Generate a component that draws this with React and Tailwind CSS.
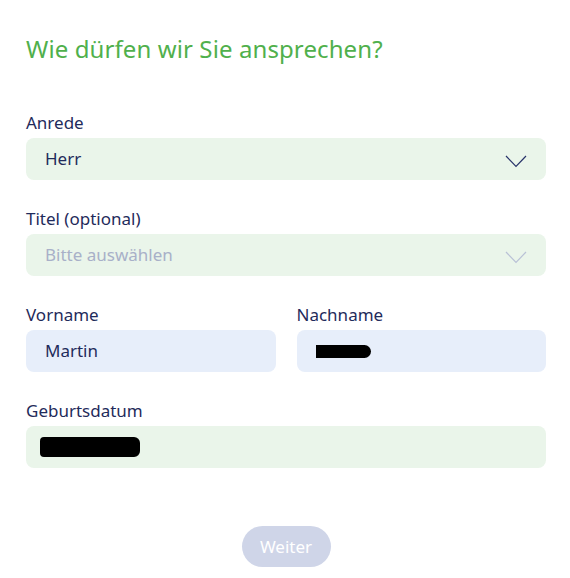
import React from "react";

function Chevron({ light }) {
    return (
        <svg width="22" height="13" viewBox="0 0 22 13" fill="none" className="mt-[4px]">
            <path
                d="M1 1 L11 11.5 L21 1"
                stroke={light ? "#b9c1d6" : "#28336a"}
                strokeWidth="1.2"
            />
        </svg>
    );
}

function Field({ label, children, bg = "bg-[#eaf5ea]", className = "" }) {
    return (
        <div className={"flex flex-col " + className}>
            <label className="text-[17px] leading-6 text-[#1f2b5b] mb-[3px]">{label}</label>
            <div className={"h-[42px] rounded-lg flex items-center pl-[19px] pr-[19px] " + bg}>
                {children}
            </div>
        </div>
    );
}

export default function App() {
    return (
        <div
            className="w-[570px] h-[578px] bg-white px-[26px] pt-[33px]"
            style={{ fontFamily: '"Noto Sans", "Open Sans", sans-serif' }}
        >
            <h1 className="text-[24px] leading-8 text-[#50b04c] tracking-[0.1px]">
                Wie dürfen wir Sie ansprechen?
            </h1>

            <div className="w-[520px] mt-[46px] flex flex-col gap-[27px]">
                <Field label="Anrede">
                    <span className="flex-1 text-[17px] text-[#1f2b5b]">Herr</span>
                    <Chevron />
                </Field>

                <Field label="Titel (optional)">
                    <span className="flex-1 text-[17px] text-[#a8b0c8]">Bitte auswählen</span>
                    <Chevron light />
                </Field>

                <div className="flex gap-[21px]">
                    <Field label="Vorname" bg="bg-[#e7eefa]" className="flex-1">
                        <span className="text-[17px] text-[#1f2b5b]">Martin</span>
                    </Field>
                    <Field label="Nachname" bg="bg-[#e7eefa]" className="flex-1">
                        <span className="block w-[55px] h-[13px] bg-black rounded-r-full rounded-l-sm"></span>
                    </Field>
                </div>

                <Field label="Geburtsdatum">
                    <span className="block w-[100px] h-[20px] -ml-[5px] bg-black rounded-r-md rounded-l-sm"></span>
                </Field>
            </div>

            <div className="flex justify-center mt-[58px] w-[520px]">
                <button className="w-[89px] h-[41px] rounded-full bg-[#cfd5e8] text-white text-[17px]">
                    Weiter
                </button>
            </div>
        </div>
    );
}
